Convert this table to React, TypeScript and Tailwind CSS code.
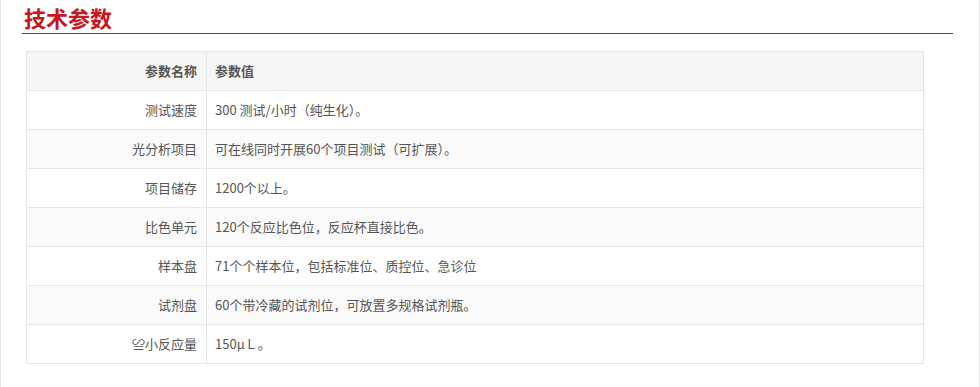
const params = [
  { name: "测试速度", value: "300 测试/小时（纯生化）。" },
  { name: "光分析项目", value: "可在线同时开展60个项目测试（可扩展）。" },
  { name: "项目储存", value: "1200个以上。" },
  { name: "比色单元", value: "120个反应比色位，反应杯直接比色。" },
  { name: "样本盘", value: "71个个样本位，包括标准位、质控位、急诊位" },
  { name: "试剂盘", value: "60个带冷藏的试剂位，可放置多规格试剂瓶。" },
  { name: "≌小反应量", value: "150μＬ。" },
];

export default function App() {
  return (
    <div
      className="w-[980px] h-[387px] bg-white border-l border-r border-[#e6e6e6] pl-[21px] pr-[26px]"
      style={{ fontFamily: '"Noto Sans CJK SC", "Noto Sans", sans-serif' }}
    >
      <div className="h-[34px] pt-[3px] pl-[2px] border-b border-[#b81c22]">
        <h2 className="text-[22px] leading-[29px] font-bold text-[#c8161d]">技术参数</h2>
      </div>

      <table className="mt-[17px] ml-[4px] w-[898px] border-collapse text-[13px] text-[#555]">
        <thead>
          <tr className="h-[39px] bg-[#f6f6f6]">
            <th className="w-[180px] border border-[#e6e6e6] pr-[9px] text-right font-bold">参数名称</th>
            <th className="border border-[#e6e6e6] pl-[8px] text-left font-bold">参数值</th>
          </tr>
        </thead>
        <tbody>
          {params.map((p, i) => (
            <tr key={p.name} className={i % 2 === 1 ? "h-[39px] bg-[#fafafa]" : "h-[39px] bg-white"}>
              <td className="border border-[#e6e6e6] pr-[9px] text-right">{p.name}</td>
              <td className="border border-[#e6e6e6] pl-[8px] text-left">{p.value}</td>
            </tr>
          ))}
        </tbody>
      </table>
    </div>
  );
}
